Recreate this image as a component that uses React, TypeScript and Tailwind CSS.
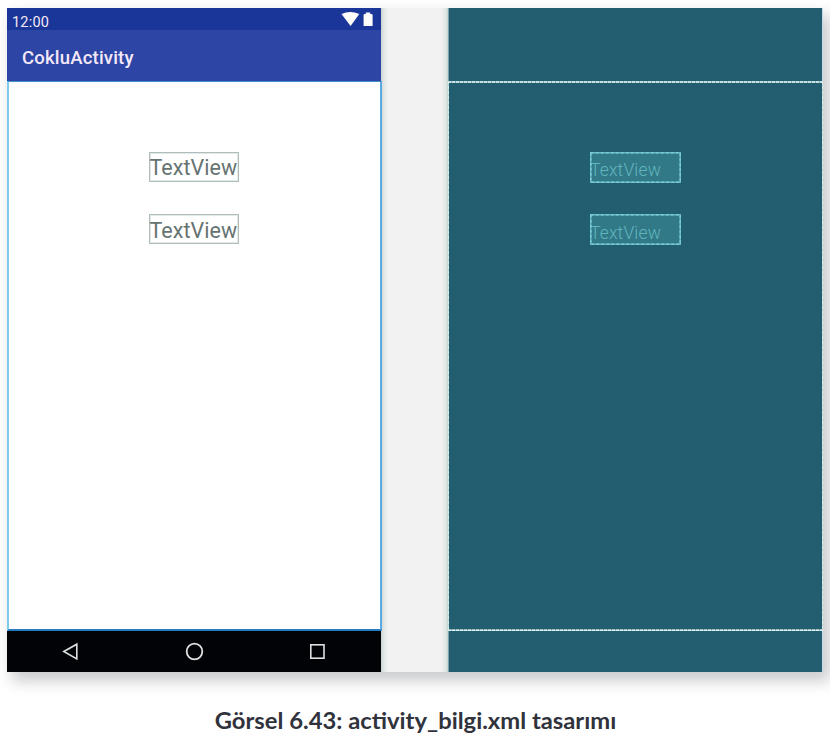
import React from "react";

function StatusIcons() {
  return (
    <svg width="34" height="18" viewBox="0 0 34 18" fill="#fffdfb">
      <path d="M1.5 6 Q10 2.2 19.3 6 L10.6 18 Z" />
      <path d="M23.6 7 Q23.6 6 24.6 6 H25.8 V4.4 H30.2 V6 H31.6 Q32.6 6 32.6 7 V18.6 H24.4 Q23.6 18.6 23.6 17.6 Z" />
    </svg>
  );
}

function DesignLabel({ inset }: { inset: string }) {
  return (
    <div className="flex h-[30px] w-[90px] items-center border border-[#b0bebb] font-['Roboto',sans-serif] text-[21.5px] leading-none whitespace-nowrap text-[#667371] shadow-[inset_0_0_0_1px_#e3e9e7]">
      <span className={`${inset} tracking-[0.05px]`}>TextView</span>
    </div>
  );
}

function BlueprintLabel({ inset }: { inset: string }) {
  return (
    <div className="relative flex h-[31px] w-[91px] items-center bg-[#317987] font-['Roboto',sans-serif] text-[17.5px] leading-none font-light tracking-[0.15px] whitespace-nowrap text-[#62b4bd]">
      <span className={inset}>TextView</span>
      <svg className="absolute inset-0" width="91" height="31" fill="none">
        <rect x="0.75" y="0.75" width="89.5" height="29.5" stroke="#63b6c0" strokeWidth="1.5" />
        <rect x="0.75" y="0.75" width="89.5" height="29.5" stroke="#7ccbd3" strokeWidth="1.5" strokeDasharray="3 2" />
      </svg>
    </div>
  );
}

function Phone() {
  return (
    <div className="relative flex h-[664px] w-[374px] shrink-0 flex-col">
      <div className="flex h-[22px] justify-between bg-[#1a3699] pr-[7px] pl-[5px]">
        <span className="pt-[7px] font-['Roboto',sans-serif] text-[14.5px] leading-[15px] tracking-[0.2px] text-[#f6e8f5]">12:00</span>
        <StatusIcons />
      </div>
      <div className="flex h-[51px] items-center bg-[#2d46a5] pl-[15px] font-['Roboto',sans-serif] text-[18.5px] font-medium tracking-[0.2px] text-[#f5e8f7]">
        <span className="pt-[5px] leading-none">CokluActivity</span>
      </div>
      <div className="flex h-[550px] w-[375px] flex-col items-center gap-8 border-t border-r-2 border-b-2 border-l-2 border-t-[#3f8dc9] border-r-[#5aabe0] border-b-[#237bc2] border-l-[#7fcbef] bg-white pt-[70px] pr-[2px]">
        <DesignLabel inset="pt-px" />
        <DesignLabel inset="pt-[3px]" />
      </div>
      <div className="h-[41px] bg-[#020307]">
        <svg width="374" height="41" fill="none" stroke="#dce2e0" strokeWidth="1.8">
          <path d="M56.8 20.5 L69.8 13.2 V27.9 Z" strokeWidth="1.6" />
          <circle cx="187.5" cy="20.5" r="7.8" />
          <rect x="303.8" y="13.8" width="13.2" height="13.4" strokeWidth="1.6" />
        </svg>
      </div>
    </div>
  );
}

function Blueprint() {
  return (
    <div className="flex h-[664px] w-[375px] shrink-0 flex-col border-x border-l-[#78a2a7] border-r-[#c1dce4] bg-[#225d70]">
      <div className="h-[73px]" />
      <div className="relative -mx-px flex h-[550px] flex-col items-center gap-[31px] pt-[71px]">
        <BlueprintLabel inset="pt-[6px]" />
        <BlueprintLabel inset="pt-[8px]" />
        <svg className="absolute inset-0" width="375" height="550" fill="none">
          <path d="M0.5 0 V550 M374.5 0 V550" stroke="#b9d6da" />
          <path d="M0.5 0 V550 M374.5 0 V550" stroke="#d6edec" strokeDasharray="3 2" />
          <path d="M0 1 H375 M0 549.2 H375" stroke="#a3c9cf" strokeWidth="1.6" />
          <path d="M0 1 H375 M0 549.2 H375" stroke="#e0f2f1" strokeWidth="1.4" strokeDasharray="3 1" />
        </svg>
      </div>
      <div className="h-[41px]" />
    </div>
  );
}

export default function App() {
  return (
    <main className="h-[741px] w-[830px] overflow-hidden bg-white pt-2 pl-[7px]">
      <div className="flex h-[664px] w-[816px] bg-[#f2f3f3] shadow-[6px_8px_14px_1px_#0f142038]">
        <Phone />
        <div className="h-[664px] w-[67px] shrink-0 bg-[linear-gradient(to_right,#ccd3d3_0px,#e2e7e6_3px,#f2f2f2_7px,#f2f2f2_60px,#dfe6e3_65px,#c5d2cf_67px)]" />
        <Blueprint />
      </div>
      <p className="mt-[33px] w-[817px] scale-y-[0.95] text-center font-['Lato',sans-serif] text-[23.8px] leading-[30px] font-bold whitespace-nowrap text-[#30323c]">
        Görsel 6.43: activity_bilgi.xml tasarımı
      </p>
    </main>
  );
}
